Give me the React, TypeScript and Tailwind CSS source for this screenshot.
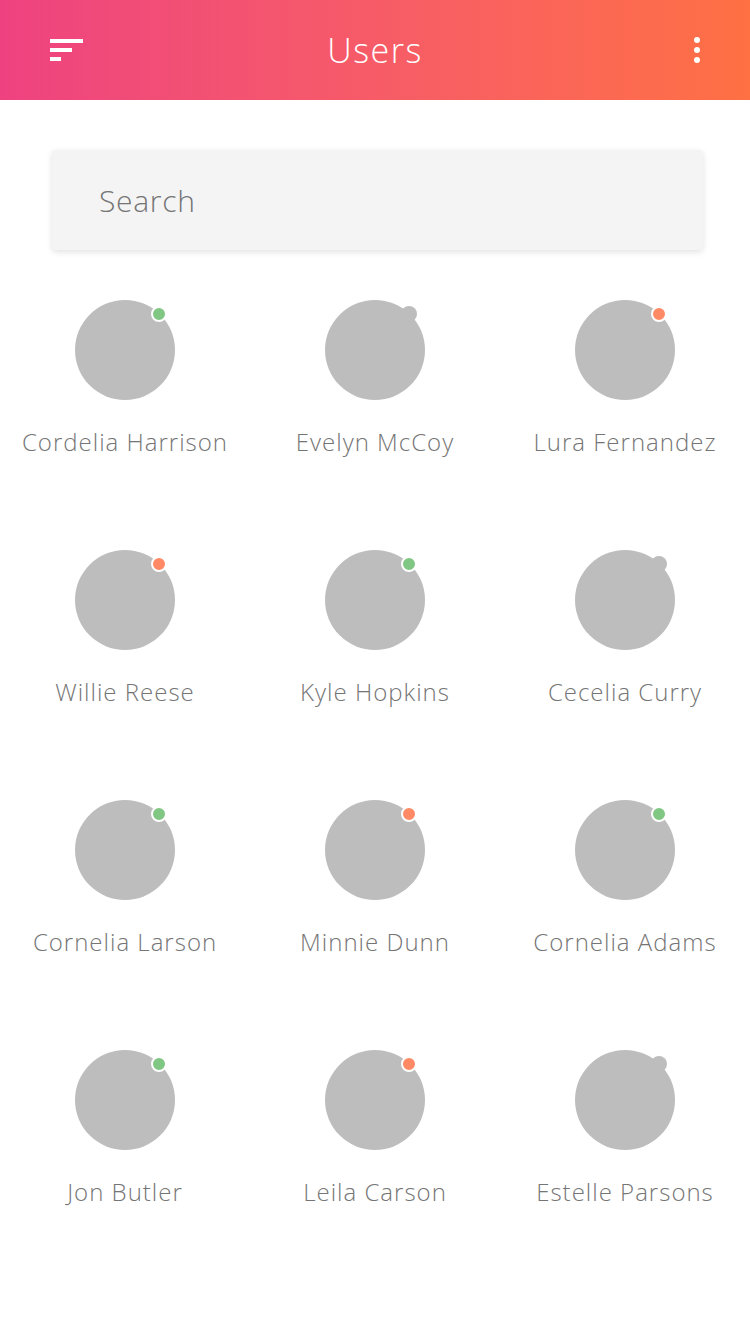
import React from 'react';

type Status = 'online' | 'busy' | 'offline';

const USERS: { name: string; status: Status }[] = [
  { name: 'Cordelia Harrison', status: 'online' },
  { name: 'Evelyn McCoy', status: 'offline' },
  { name: 'Lura Fernandez', status: 'busy' },
  { name: 'Willie Reese', status: 'busy' },
  { name: 'Kyle Hopkins', status: 'online' },
  { name: 'Cecelia Curry', status: 'offline' },
  { name: 'Cornelia Larson', status: 'online' },
  { name: 'Minnie Dunn', status: 'busy' },
  { name: 'Cornelia Adams', status: 'online' },
  { name: 'Jon Butler', status: 'online' },
  { name: 'Leila Carson', status: 'busy' },
  { name: 'Estelle Parsons', status: 'offline' },
];

function StatusDot({ status }: { status: Status }) {
  if (status === 'offline') {
    return <span className="absolute right-[8px] top-[6px] w-4 h-4 rounded-full bg-[#bdbdbd]" />;
  }
  return (
    <span
      className={
        status === 'online'
          ? 'absolute right-[8px] top-[6px] w-4 h-4 rounded-full border-2 border-white bg-[#81c784]'
          : 'absolute right-[8px] top-[6px] w-4 h-4 rounded-full border-2 border-white bg-[#ff8a65]'
      }
    />
  );
}

export default function App() {
  return (
    <main
      className="min-h-screen bg-white"
      style={{ fontFamily: '"Open Sans", Lato, sans-serif' }}
    >
      {/* Header */}
      <header className="h-[100px] flex items-center justify-between px-[50px] bg-gradient-to-r from-[#ee4280] to-[#ff7043]">
        <div className="flex flex-col gap-[5px] w-[33px]">
          <span className="block h-1 w-[33px] bg-white" />
          <span className="block h-1 w-[22px] bg-white" />
          <span className="block h-1 w-[11px] bg-white" />
        </div>
        <h1 className="text-[34px] font-light text-white leading-none tracking-[1.5px]">Users</h1>
        <div className="flex flex-col items-center gap-1 w-[33px] pl-[27px]">
          <span className="block w-[6px] h-[6px] rounded-full bg-white" />
          <span className="block w-[6px] h-[6px] rounded-full bg-white" />
          <span className="block w-[6px] h-[6px] rounded-full bg-white" />
        </div>
      </header>

      {/* Search */}
      <div className="pl-[52px] pr-[47px] pt-[50px]">
        <div className="h-[100px] rounded bg-[#f4f4f4] shadow-[0_2px_6px_rgba(0,0,0,0.12)] flex items-center px-[47px]">
          <span className="text-[30px] font-light text-[#757575] tracking-[0.7px]">Search</span>
        </div>
      </div>

      {/* Grid */}
      <section className="grid grid-cols-3 pt-[50px]">
        {USERS.map(u => (
          <div key={u.name} className="h-[250px] flex flex-col items-center">
            <div className="relative w-[100px] h-[100px]">
              <div className="w-full h-full rounded-full bg-[#bdbdbd]" />
              <StatusDot status={u.status} />
            </div>
            <span className="mt-[26px] text-[24px] font-light text-[#757575] leading-8 tracking-[1px] whitespace-nowrap">
              {u.name}
            </span>
          </div>
        ))}
      </section>
    </main>
  );
}
